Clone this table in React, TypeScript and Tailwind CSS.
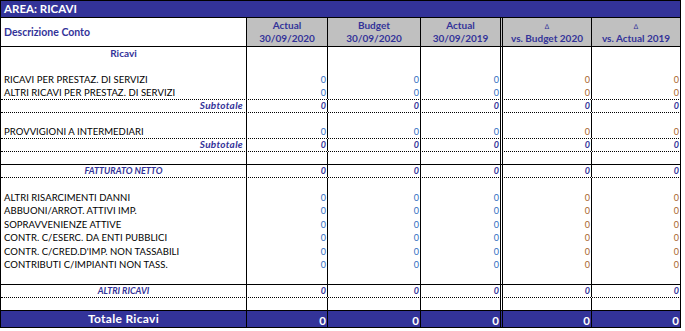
import React from "react";

type Kind = "section" | "blank" | "item" | "sub" | "center" | "total";
type Row = { kind: Kind; label?: string; h: number; b?: "dotted" | "solid" };

const rows: Row[] = [
  { kind: "section", label: "Ricavi", h: 13 },
  { kind: "blank", h: 13 },
  { kind: "item", label: "RICAVI PER PRESTAZ. DI SERVIZI", h: 13 },
  { kind: "item", label: "ALTRI RICAVI PER PRESTAZ. DI SERVIZI", h: 14, b: "dotted" },
  { kind: "sub", label: "Subtotale", h: 13, b: "dotted" },
  { kind: "blank", h: 13 },
  { kind: "item", label: "PROVVIGIONI A INTERMEDIARI", h: 13, b: "dotted" },
  { kind: "sub", label: "Subtotale", h: 13, b: "dotted" },
  { kind: "blank", h: 13, b: "solid" },
  { kind: "center", label: "FATTURATO NETTO", h: 13, b: "dotted" },
  { kind: "blank", h: 13 },
  { kind: "item", label: "ALTRI RISARCIMENTI DANNI", h: 13 },
  { kind: "item", label: "ABBUONI/ARROT. ATTIVI IMP.", h: 13 },
  { kind: "item", label: "SOPRAVVENIENZE ATTIVE", h: 14 },
  { kind: "item", label: "CONTR. C/ESERC. DA ENTI PUBBLICI", h: 13 },
  { kind: "item", label: "CONTR. C/CRED.D'IMP. NON TASSABILI", h: 14 },
  { kind: "item", label: "CONTRIBUTI C/IMPIANTI NON TASS.", h: 13 },
  { kind: "blank", h: 14, b: "solid" },
  { kind: "center", label: "ALTRI RICAVI", h: 13, b: "dotted" },
  { kind: "blank", h: 13, b: "solid" },
  { kind: "total", label: "Totale Ricavi", h: 17 },
];

const colW = ["w-[81px]", "w-[93px]", "w-[82px]", "w-[89px]", "w-[89px]"];
const colBorder = [
  "border-r border-black",
  "border-r border-black",
  "border-r-[3px] border-double border-black",
  "border-r border-black",
  "border-r border-black",
];

const font = { fontFamily: "Lato, 'Noto Sans', sans-serif" };

function ValueCell({ i, kind }: { i: number; kind: Kind }) {
  let content: React.ReactNode = null;
  if (kind === "item") {
    content = (
      <span className={i < 3 ? "text-[#2f6cc0]" : "text-[#a8642c]"}>0</span>
    );
  } else if (kind === "sub" || kind === "center") {
    content = <span className="italic font-bold text-[#333399]">0</span>;
  } else if (kind === "total") {
    content = <span className="font-bold text-white text-[11.5px]">0</span>;
  }
  return (
    <div
      className={`${colW[i]} ${colBorder[i]} shrink-0 flex items-end justify-end pr-[1px] pb-[1px] leading-[11px]`}
    >
      {content}
    </div>
  );
}

function DescCell({ row }: { row: Row }) {
  const base =
    "w-[246px] shrink-0 border-r border-black flex items-end pb-[1px] leading-[11px]";
  switch (row.kind) {
    case "section":
      return (
        <div className={`${base} justify-center font-bold text-[#333399] text-[10px]`}>
          {row.label}
        </div>
      );
    case "item":
      return (
        <div className={`${base} pl-[3px] text-black uppercase text-[9.5px] tracking-[0.05px]`}>
          {row.label}
        </div>
      );
    case "sub":
      return (
        <div className={`${base} justify-end pr-[3px] italic font-bold text-[#333399] text-[10px] tracking-[0.3px]`}>
          {row.label}
        </div>
      );
    case "center":
      return (
        <div className={`${base} justify-center italic font-bold text-[#333399]`}>
          {row.label}
        </div>
      );
    case "total":
      return (
        <div className={`${base} justify-center font-bold text-white text-[12px] leading-[14px] tracking-[0.3px]`}>
          {row.label}
        </div>
      );
    default:
      return <div className={base} />;
  }
}

export default function App() {
  return (
    <div className="w-[685px] h-[331px] bg-white text-[9px]" style={font}>
      <div className="w-[681px] border-l border-black">
        {/* title */}
        <div className="h-[18px] bg-[#333399] border-t border-b border-r border-black flex items-end pl-[3px] pb-[1px]">
          <span className="text-white font-bold text-[11.5px] leading-[14px]">AREA: RICAVI</span>
        </div>
        {/* header */}
        <div className="h-[29px] flex border-b border-black">
          <div className="w-[246px] shrink-0 border-r border-black flex items-center pl-[3px] pt-[2px]">
            <span className="text-[#333399] font-bold text-[10.5px]">Descrizione Conto</span>
          </div>
          {[
            ["Actual", "30/09/2020"],
            ["Budget", "30/09/2020"],
            ["Actual", "30/09/2019"],
            ["∆", "vs. Budget 2020"],
            ["∆", "vs. Actual 2019"],
          ].map(([a, b], i) => (
            <div
              key={i}
              className={`${colW[i]} ${colBorder[i]} shrink-0 bg-[#c0c0c0] flex flex-col items-center justify-end pb-[1px] text-[#333399] font-bold text-[10px] leading-[13px]`}
            >
              <span className={i >= 3 ? "text-[7px] font-normal leading-[12px]" : ""}>{a}</span>
              <span>{b}</span>
            </div>
          ))}
        </div>
        {rows.map((row, idx) => (
          <div
            key={idx}
            style={{ height: row.h }}
            className={`flex ${row.kind === "total" ? "bg-[#333399] border-b border-black" : ""} ${
              row.b === "dotted"
                ? "border-b border-dotted border-black"
                : row.b === "solid"
                ? "border-b border-black"
                : ""
            }`}
          >
            <DescCell row={row} />
            {[0, 1, 2, 3, 4].map((i) => (
              <ValueCell key={i} i={i} kind={row.kind} />
            ))}
          </div>
        ))}
      </div>
    </div>
  );
}
